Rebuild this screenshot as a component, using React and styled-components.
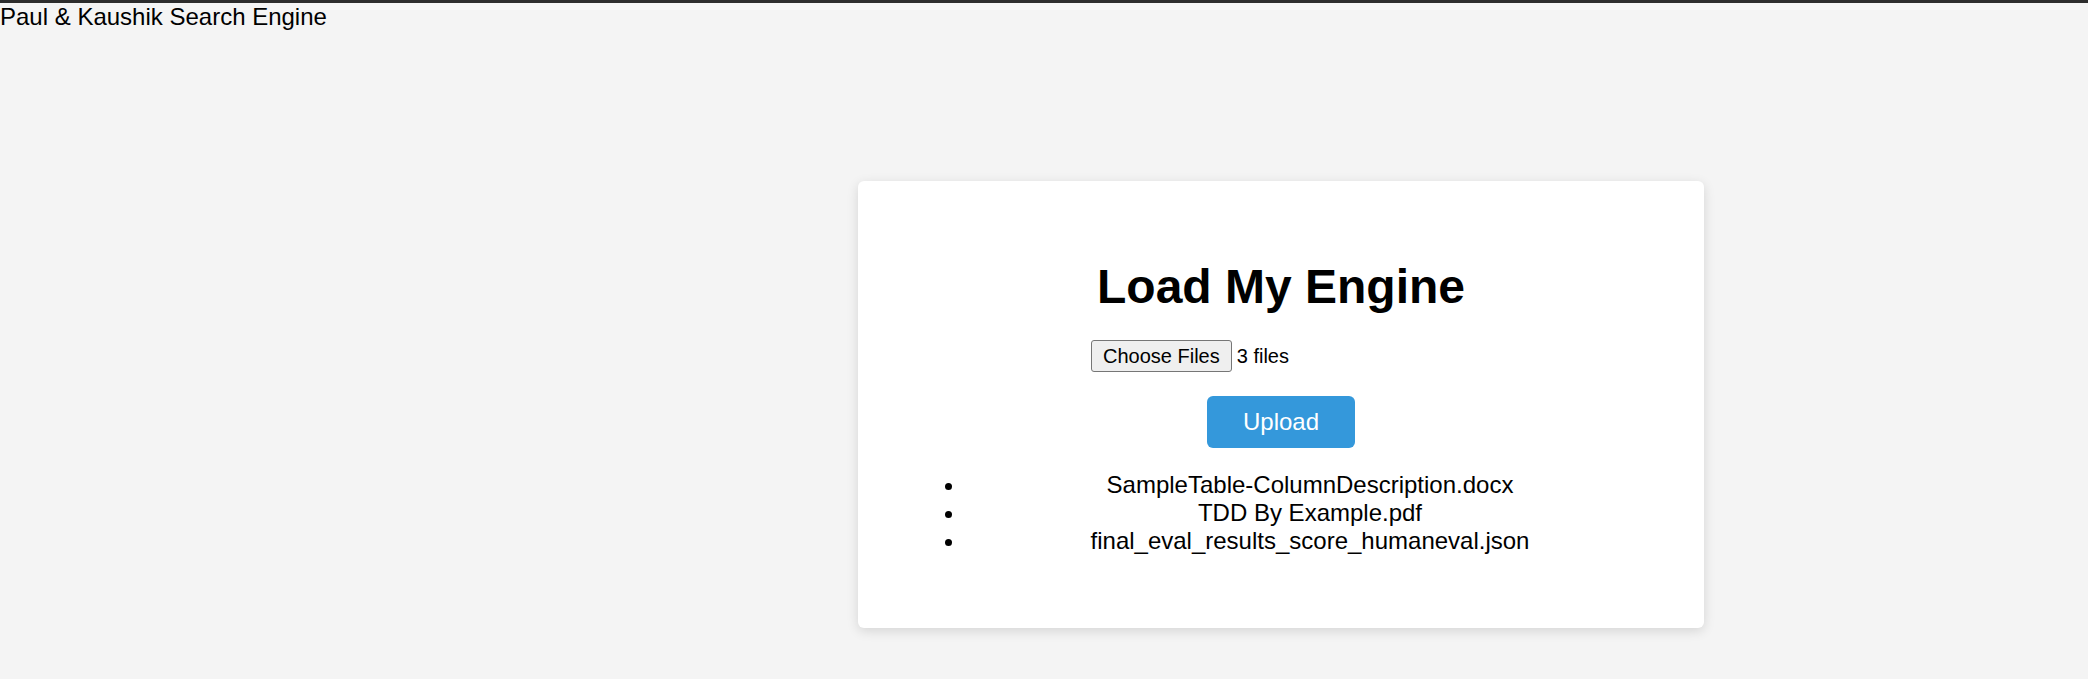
import React from 'react'
import styled, { createGlobalStyle } from 'styled-components'

const files = [
  'SampleTable-ColumnDescription.docx',
  'TDD By Example.pdf',
  'final_eval_results_score_humaneval.json',
]

function App() {
  return (
    <>
      <GlobalStyle />
      <Page>
        <Header>Paul &amp; Kaushik Search Engine</Header>
        <Stage>
          <Card>
            <Title>Load My Engine</Title>
            <FileRow>
              <ChooseButton type="button">Choose Files</ChooseButton>
              <FileCount>3 files</FileCount>
            </FileRow>
            <UploadButton type="button">Upload</UploadButton>
            <FileList>
              {files.map((name) => (
                <li key={name}>{name}</li>
              ))}
            </FileList>
          </Card>
        </Stage>
      </Page>
    </>
  )
}

export default App

const GlobalStyle = createGlobalStyle`
  html, body {
    margin: 0;
    padding: 0;
    background: #f4f4f4;
  }
  body {
    font-family: "Liberation Sans", Arial, sans-serif;
    color: #000;
  }
`

const Page = styled.div`
  min-height: 679px;
  border-top: 3px solid #2c2c2c;
  box-sizing: border-box;
  background: #f4f4f4;
`

const Header = styled.div`
  font-size: 24px;
  line-height: normal;
`

const Stage = styled.main`
  display: flex;
  justify-content: center;
  padding: 150px 0 0 474px;
`

const Card = styled.section`
  width: 846px;
  box-sizing: border-box;
  padding: 78px 55px 73px;
  background: #fff;
  border-radius: 6px;
  box-shadow: 0 3px 12px rgba(0, 0, 0, 0.13);
  display: flex;
  flex-direction: column;
  align-items: center;
`

const Title = styled.h1`
  margin: 0;
  font-size: 48px;
  font-weight: bold;
  line-height: normal;
`

const FileRow = styled.div`
  width: 378px;
  margin-top: 26px;
  display: flex;
  align-items: center;
`

const ChooseButton = styled.button`
  height: 32px;
  padding: 0 11px;
  margin: 0 5px 0 -1px;
  font-family: "Liberation Sans", Arial, sans-serif;
  font-size: 20px;
  color: #000;
  background: #efefef;
  border: 1px solid #767676;
  border-radius: 3px;
`

const FileCount = styled.span`
  font-size: 20px;
`

const UploadButton = styled.button`
  margin-top: 24px;
  height: 52px;
  padding: 0 36px;
  font-family: "Liberation Sans", Arial, sans-serif;
  font-size: 24px;
  color: #fff;
  background: #3498db;
  border: none;
  border-radius: 6px;
`

const FileList = styled.ul`
  align-self: stretch;
  margin: 23px -5px 0 0;
  padding-left: 53px;
  font-size: 24px;
  line-height: normal;
  li {
    text-align: center;
  }
`
